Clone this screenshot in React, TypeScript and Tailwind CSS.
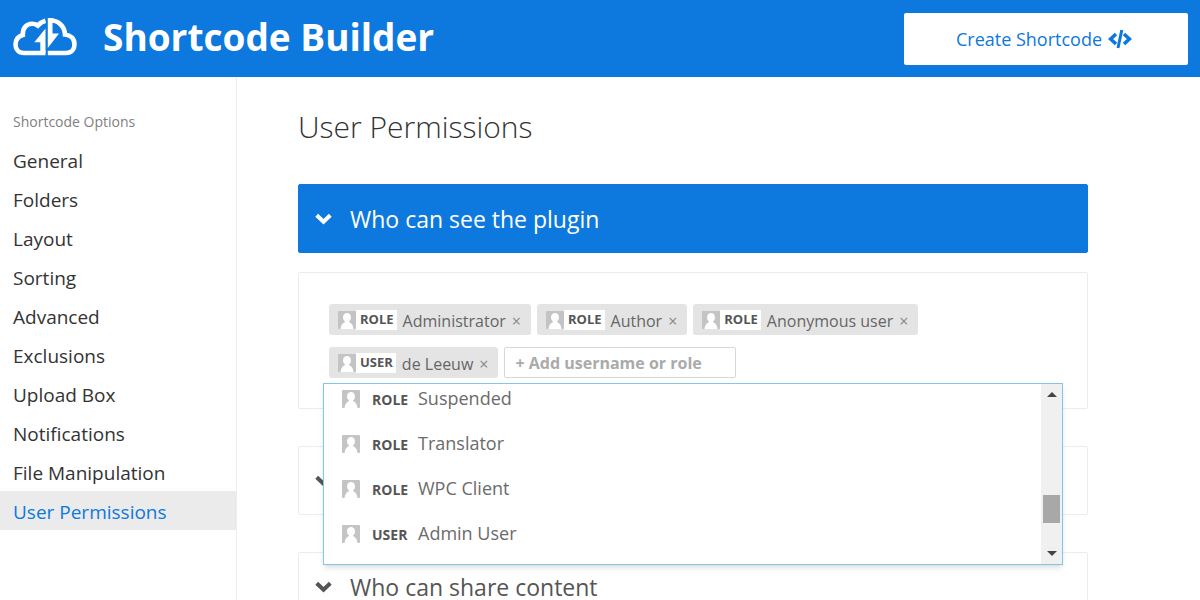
interface Account {
  type: 'ROLE' | 'USER';
  name: string;
}

const menuItems = [
  'General',
  'Folders',
  'Layout',
  'Sorting',
  'Advanced',
  'Exclusions',
  'Upload Box',
  'Notifications',
  'File Manipulation',
  'User Permissions'
];

const selected: Account[] = [
  { type: 'ROLE', name: 'Administrator' },
  { type: 'ROLE', name: 'Author' },
  { type: 'ROLE', name: 'Anonymous user' },
  { type: 'USER', name: 'de Leeuw' }
];

const suggestions: Account[] = [
  { type: 'ROLE', name: 'Suspended' },
  { type: 'ROLE', name: 'Translator' },
  { type: 'ROLE', name: 'WPC Client' },
  { type: 'USER', name: 'Admin User' }
];

function Logo() {
  return (
    <svg viewBox="0 0 64 40" className="h-10 w-16" fill="none" stroke="#fff" strokeWidth="4.6" aria-hidden="true">
      <path d="M32.5 36H11C5.5 36 2.5 32 2.5 27.5C2.5 22.5 5.5 19.3 9.8 18C9.3 10.5 14 6.8 19 6.8C21.5 6.8 23 7.2 24.8 8.6C27 6.2 29.5 4.6 32.5 3.8" />
      <path d="M32.5 11.5V36H27.3V25.2H21.3Z" fill="#fff" stroke="none" />
      <path d="M34.8 36H53C58.5 36 61.5 32 61.5 27.5C61.5 21.5 57.5 18 52 17.5C51.5 9 45.5 3.3 36.5 3.3" />
      <path d="M34.8 1H39.5V16.5H46L34.8 31Z" fill="#fff" stroke="none" />
    </svg>
  );
}

function ChevronIcon() {
  return (
    <svg viewBox="0 0 17 12" className="h-3 w-[17px] shrink-0" fill="none" stroke="currentColor" strokeWidth="4" aria-hidden="true">
      <path d="M1.7 2.3L8.5 8.7L15.3 2.3" />
    </svg>
  );
}

function CodeIcon() {
  return (
    <svg viewBox="0 0 24 20" className="h-5 w-6" fill="none" stroke="currentColor" strokeWidth="3.6" aria-hidden="true">
      <path d="M8 5L2.6 10L8 15" />
      <path d="M16 5L21.4 10L16 15" />
      <path d="M13.8 1L10 19" strokeWidth="3" />
    </svg>
  );
}

function Avatar() {
  return (
    <svg viewBox="0 0 18 18" className="size-[18px] shrink-0" aria-hidden="true">
      <rect width="18" height="18" rx="1" fill="#c4c4c4" />
      <ellipse cx="9" cy="6.5" rx="4" ry="4.5" fill="#fff" />
      <path d="M2.5 18C3 14 4.5 12 7 11V9H11V11C13.5 12 15 14 15.5 18Z" fill="#fff" />
    </svg>
  );
}

function Tag({ type, name }: Account) {
  return (
    <li className="flex h-[31px] items-center rounded-[3px] bg-[#e4e4e4] pr-2.5 pl-[9px]">
      <Avatar />
      <span className="flex h-5 items-center bg-white pr-[3px] pl-1 text-[13px] font-bold text-[#555]">{type}</span>
      <span className="pt-0.5 pl-1.5 text-base leading-6 text-[#666]">{name}</span>
      <button type="button" aria-label={`Remove ${name}`} className="pt-0.5 pl-1.5 text-base leading-6 text-[#888]">
        ×
      </button>
    </li>
  );
}

function Suggestions() {
  return (
    <div className="absolute inset-x-6 top-[110px] z-10 flex h-[182px] overflow-hidden border border-[#84c5ec] bg-white shadow-md">
      <ul className="flex flex-1 flex-col justify-end pb-2">
        {suggestions.map((item) => (
          <li key={item.name} className="flex h-[45px] shrink-0 items-center pl-[18px]">
            <Avatar />
            <span className="w-[58px] pt-0.5 pl-3 text-sm font-bold text-[#555]">{item.type}</span>
            <span className="pb-0.5 text-lg leading-6 text-[#6b6b6b]">{item.name}</span>
          </li>
        ))}
      </ul>
      <div className="flex w-[21px] flex-col items-center bg-[#f0f0f0]">
        <svg viewBox="0 0 10 5" className="mt-2 h-[5px] w-2.5" aria-hidden="true">
          <path d="M0 5L5 0L10 5Z" fill="#444" />
        </svg>
        <div className="mt-auto h-7 w-[17px] bg-[#a8a8a8]" />
        <svg viewBox="0 0 10 5" className="mt-7 mb-2 h-[5px] w-2.5" aria-hidden="true">
          <path d="M0 0L5 5L10 0Z" fill="#444" />
        </svg>
      </div>
    </div>
  );
}

function AccordionTitle({ title, label, open = false }: { title?: string; label?: string; open?: boolean }) {
  return (
    <h3>
      <button
        type="button"
        aria-expanded={open}
        aria-label={label}
        className={
          open
            ? 'flex h-[69px] w-full items-center gap-[18px] rounded-xs border border-[#0d78dd] bg-[#0d78dd] px-4 text-[23px] leading-6 text-white'
            : 'flex h-[69px] w-full items-center gap-[18px] rounded-xs border border-[#ececec] bg-white px-4 text-[23px] leading-6 text-[#555]'
        }
      >
        <ChevronIcon />
        {title}
      </button>
    </h3>
  );
}

export default function App() {
  return (
    <div className="flex h-screen flex-col overflow-hidden bg-white font-['Open_Sans','Noto_Sans',sans-serif] text-[#333]">
      <header className="flex h-[77px] shrink-0 items-center justify-between bg-[#0d78dd] pr-3 pl-[13px]">
        <div className="flex items-center gap-[26px] pb-1">
          <Logo />
          <h1 className="text-[37px] leading-10 font-bold text-white">Shortcode Builder</h1>
        </div>
        <button
          type="button"
          className="flex h-[52px] w-[284px] items-center justify-center gap-1.5 rounded-xs bg-white pr-1 text-lg text-[#0d78dd]"
        >
          Create Shortcode
          <CodeIcon />
        </button>
      </header>

      <div className="flex min-h-0 flex-1">
        <nav className="w-[237px] shrink-0 border-r border-[#ececec] pt-[33px]">
          <p className="h-[30px] pl-[13px] text-sm leading-6 text-[#808080]">Shortcode Options</p>
          <ul>
            {menuItems.map((item) => (
              <li key={item}>
                <a
                  href="#"
                  className={
                    item === 'User Permissions'
                      ? 'block bg-[#ebebeb] pt-[3px] pl-[13px] text-[19px] leading-9 text-[#0d78dd]'
                      : 'block pt-[3px] pl-[13px] text-[19px] leading-9 text-[#333]'
                  }
                >
                  {item}
                </a>
              </li>
            ))}
          </ul>
        </nav>

        <main className="min-w-0 flex-1 pt-[26px] pr-28 pl-[61px]">
          <h2 className="mb-[33px] text-3xl leading-[48px] font-light">User Permissions</h2>

          <AccordionTitle title="Who can see the plugin" open />
          <div className="relative mt-[19px] mb-[37px] h-[137px] rounded-xs border border-[#ececec] px-[30px] pt-[31px]">
            <ul className="flex flex-wrap gap-x-1.5 gap-y-3">
              {selected.map((item) => (
                <Tag key={item.name} type={item.type} name={item.name} />
              ))}
              <li>
                <input
                  type="text"
                  aria-label="Add username or role"
                  placeholder="+ Add username or role"
                  className="block h-[31px] w-[232px] rounded-xs border border-[#d8d8d8] px-2.5 text-base font-bold placeholder:text-[#aaa]"
                />
              </li>
            </ul>
            <Suggestions />
          </div>

          <div className="flex flex-col gap-[37px]">
            <AccordionTitle label="Collapsed section" />
            <AccordionTitle title="Who can share content" />
          </div>
        </main>
      </div>
    </div>
  );
}
